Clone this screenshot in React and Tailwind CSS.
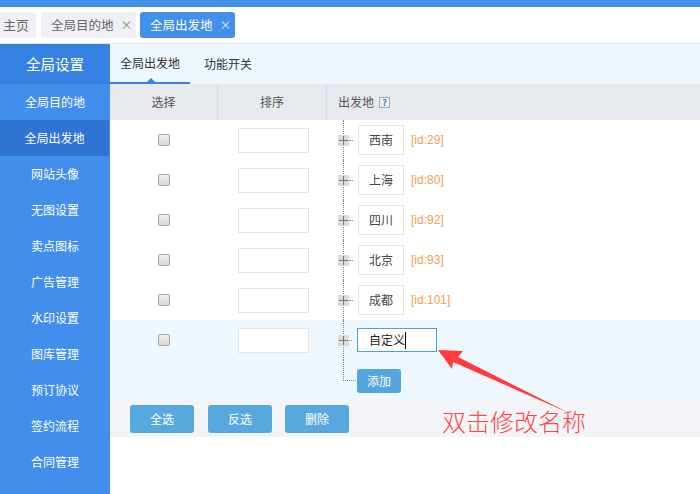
import React from 'react';

const rows = [
    { name: '西南', id: 29 },
    { name: '上海', id: 80 },
    { name: '四川', id: 92 },
    { name: '北京', id: 93 },
    { name: '成都', id: 101 },
];

const menu = ['网站头像', '无图设置', '卖点图标', '广告管理', '水印设置', '图库管理', '预订协议', '签约流程', '合同管理'];

const CheckBox = () => (
    <div className="w-[12px] h-[12px] rounded-[2px] border border-[#a9a9a9] bg-gradient-to-b from-[#eeeeee] to-[#d6d6d6]" />
);

const PlusBox = () => (
    <div className="-ml-[6px] w-[11px] h-[11px] bg-[#dcdcdc] flex items-center justify-center shrink-0">
        <svg width="9" height="9" viewBox="0 0 9 9">
            <path d="M0 4.5h9M4.5 0v9" stroke="#777" strokeWidth="1" />
        </svg>
    </div>
);

const Arrow = () => (
    <svg className="absolute left-0 top-0 pointer-events-none" width="700" height="494">
        <polygon points="438,350 463,351 458,357 569,413 453,362 452,369" fill="#ff3b3b" />
    </svg>
);

const App = () => {
    return (
        <div className="relative w-[700px] h-[494px] overflow-hidden bg-white flex flex-col font-['Noto_Sans_CJK_SC','Microsoft_YaHei',sans-serif] text-[12px] whitespace-nowrap">
            {/* barre du haut */}
            <div className="h-[7px] bg-[#428fec] shrink-0" />
            <div className="h-[37px] shrink-0 border-b border-[#dfe4ec] flex items-start pt-[5px] gap-[5px] text-[13px]">
                <div className="h-[26px] w-[36px] shrink-0 rounded-r-[3px] bg-[#eff0f5] text-[#666] flex items-center pl-[3px]">主页</div>
                <div className="h-[26px] w-[95px] shrink-0 rounded-[3px] bg-[#eff0f5] text-[#666] flex items-center pl-[10px]">
                    <span className="text-[12.5px]">全局目的地</span>
                    <span className="ml-[7px] text-[#888] text-[12px]">×</span>
                </div>
                <div className="h-[26px] w-[95px] shrink-0 rounded-[3px] bg-[#428fec] text-white flex items-center pl-[10px] -ml-[1px]">
                    <span className="text-[12.5px]">全局出发地</span>
                    <span className="ml-[7px] text-[#dce8fb] text-[12px]">×</span>
                </div>
            </div>

            <div className="flex flex-1 min-h-0">
                {/* menu gauche */}
                <div className="w-[110px] shrink-0 bg-[#428eec] text-white flex flex-col">
                    <div className="h-[40px] bg-[#3682e3] flex items-center justify-center text-[14.5px]">全局设置</div>
                    <div className="h-[36px] flex items-center justify-center">全局目的地</div>
                    <div className="h-[36px] flex items-center justify-center bg-[#2f73d3] mr-[1px]">全局出发地</div>
                    {menu.map(m => (
                        <div key={m} className="h-[36px] flex items-center justify-center">{m}</div>
                    ))}
                </div>

                {/* contenu */}
                <div className="flex-1 flex flex-col">
                    <div className="h-[40px] bg-[#eef6fe] flex items-stretch text-[#333]">
                        <div className="relative w-[80px] flex items-center justify-center border-b-2 border-[#3a81da]">
                            全局出发地
                            <span className="absolute bottom-0 left-[37px] w-0 h-0 border-l-[4px] border-r-[4px] border-b-[4px] border-l-transparent border-r-transparent border-b-[#3a81da]" />
                        </div>
                        <div className="flex items-center pl-[14px]">功能开关</div>
                    </div>

                    <div className="h-[36px] bg-[#e6e9ee] flex text-[#555]">
                        <div className="w-[108px] flex items-center justify-center border-r border-[#d6dae0]">选择</div>
                        <div className="w-[109px] flex items-center justify-center border-r border-[#d6dae0]">排序</div>
                        <div className="flex-1 flex items-center pl-[11px]">
                            出发地
                            <span className="ml-[5px] w-[11px] h-[11px] border border-[#aaa] bg-[#f0f0f0] text-[#2d7fd8] font-bold text-[9px] leading-none flex items-center justify-center">?</span>
                        </div>
                    </div>

                    {rows.map(r => (
                        <div key={r.id} className="h-[40px] flex">
                            <div className="w-[108px] flex items-center justify-center"><CheckBox /></div>
                            <div className="w-[109px] flex items-center justify-center pl-[2px]">
                                <div className="w-[71px] h-[25px] border border-[#e4e4e4] bg-white" />
                            </div>
                            <div className="flex-1 pl-[16px]">
                                <div className="h-full border-l border-dotted border-[#888] flex items-center">
                                    <PlusBox />
                                    <div className="w-[4px] border-t border-dotted border-[#888]" />
                                    <div className="ml-[5px] w-[46px] h-[30px] border border-[#e4e4e4] flex items-center justify-center text-[#444]">{r.name}</div>
                                    <span className="ml-[7px] text-[12px] text-[#f3a04c] font-['Liberation_Sans',sans-serif]">[id:{r.id}]</span>
                                </div>
                            </div>
                        </div>
                    ))}

                    <div className="bg-[#eef6fe]">
                        <div className="h-[40px] flex">
                            <div className="w-[108px] flex items-center justify-center"><CheckBox /></div>
                            <div className="w-[109px] flex items-center justify-center pl-[2px]">
                                <div className="w-[71px] h-[25px] border border-[#e4e4e4] bg-white" />
                            </div>
                            <div className="flex-1 pl-[16px]">
                                <div className="h-full border-l border-dotted border-[#888] flex items-center">
                                    <PlusBox />
                                    <div className="w-[3px] border-t border-dotted border-[#888]" />
                                    <div className="ml-[5px] w-[80px] h-[24px] border border-[#4a9fe0] bg-white flex items-center pl-[11px] text-[#222]">
                                        自定义<span className="w-px h-[17px] bg-black" />
                                    </div>
                                </div>
                            </div>
                        </div>
                        <div className="h-[40px] flex">
                            <div className="w-[217px]" />
                            <div className="flex-1 pl-[16px] flex">
                                <div className="h-[21px] w-[13px] border-l border-b border-dotted border-[#888]" />
                                <div className="mt-[9px] ml-[1px] w-[44px] h-[24px] rounded-[3px] bg-[#55a6df] text-white flex items-center justify-center">添加</div>
                            </div>
                        </div>
                    </div>

                    <div className="h-[37px] bg-[#f2f4f8] flex items-center pl-[20px] gap-[14px] text-white">
                        <div className="w-[64px] h-[28px] rounded-[3px] bg-[#58a8e0] flex items-center justify-center">全选</div>
                        <div className="w-[64px] h-[28px] rounded-[3px] bg-[#58a8e0] flex items-center justify-center">反选</div>
                        <div className="w-[64px] h-[28px] rounded-[3px] bg-[#58a8e0] flex items-center justify-center -ml-[1px]">删除</div>
                    </div>
                </div>
            </div>

            <Arrow />
            <div className="absolute left-[442px] top-[405px] text-[24px] leading-[32px] text-[#ff4646] font-light">双击修改名称</div>
        </div>
    );
};

export default App;
